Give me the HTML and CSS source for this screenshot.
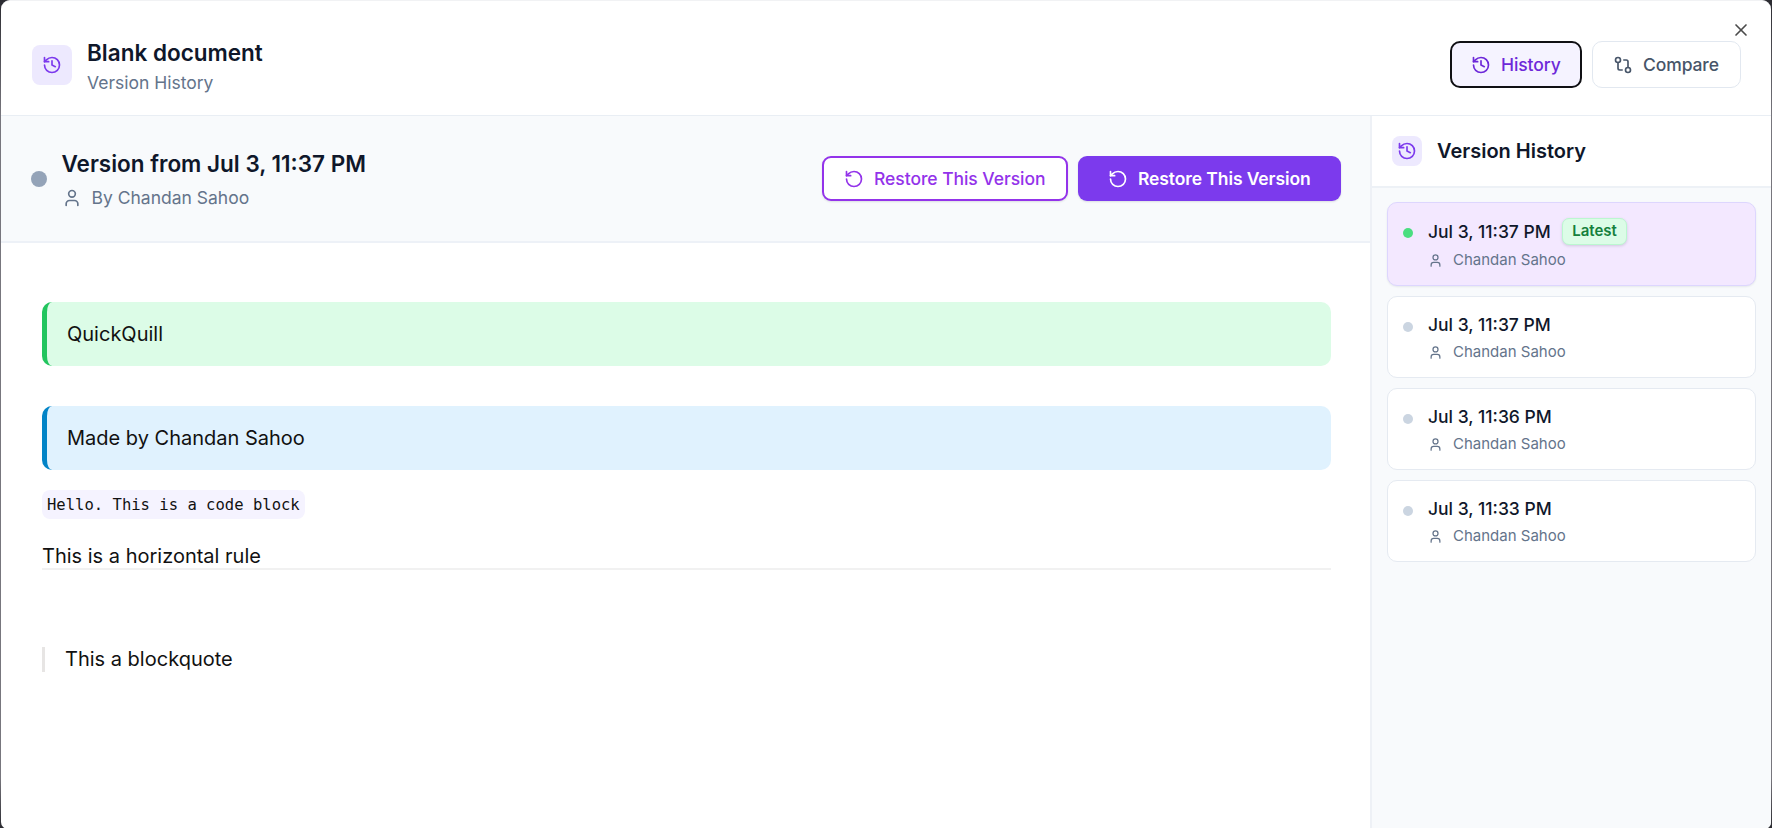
FILE: index.html
```html
<!DOCTYPE html>
<html lang="en">
<head>
<meta charset="utf-8">
<title>Version History</title>
<link rel="stylesheet" href="styles.css">
</head>
<body>
<svg class="sprite" aria-hidden="true">
  <symbol id="history" viewBox="0 0 24 24"><path d="M3 12a9 9 0 1 0 9-9 9.75 9.75 0 0 0-6.74 2.74L3 8"/><path d="M3 3v5h5"/><path d="M12 7v5l4 2"/></symbol>
  <symbol id="restore" viewBox="0 0 24 24"><path d="M3 12a9 9 0 1 0 9-9 9.75 9.75 0 0 0-6.74 2.74L3 8"/><path d="M3 3v5h5"/></symbol>
  <symbol id="compare" viewBox="0 0 24 24"><circle cx="18" cy="18" r="3"/><circle cx="6" cy="6" r="3"/><path d="M13 6h3a2 2 0 0 1 2 2v7"/><path d="M11 18H8a2 2 0 0 1-2-2V9"/></symbol>
  <symbol id="user" viewBox="0 0 24 24"><path d="M19 21v-2a4 4 0 0 0-4-4H9a4 4 0 0 0-4 4v2"/><circle cx="12" cy="7" r="4"/></symbol>
  <symbol id="close" viewBox="0 0 24 24"><path d="M18 6 6 18"/><path d="m6 6 12 12"/></symbol>
</svg>
<div class="dialog">
  <header class="header">
    <div class="brand">
      <span class="tile"><svg class="icon"><use href="#history"/></svg></span>
      <div>
        <h1 class="title">Blank document</h1>
        <p class="subtitle">Version History</p>
      </div>
    </div>
    <div class="tabs">
      <button class="tab tab-active"><svg class="icon"><use href="#history"/></svg>History</button>
      <button class="tab"><svg class="icon"><use href="#compare"/></svg>Compare</button>
    </div>
    <button class="close" aria-label="Close"><svg class="icon"><use href="#close"/></svg></button>
  </header>
  <div class="body">
    <main class="main">
      <div class="version-bar">
        <span class="version-dot"></span>
        <div class="version-info">
          <h2 class="version-title">Version from Jul 3, 11:37 PM</h2>
          <p class="version-author"><svg class="icon"><use href="#user"/></svg>By Chandan Sahoo</p>
        </div>
        <div class="actions">
          <button class="btn btn-outline"><svg class="icon"><use href="#restore"/></svg>Restore This Version</button>
          <button class="btn btn-solid"><svg class="icon"><use href="#restore"/></svg>Restore This Version</button>
        </div>
      </div>
      <article class="doc">
        <div class="callout callout-green">QuickQuill</div>
        <div class="callout callout-blue">Made by Chandan Sahoo</div>
        <code class="code">Hello. This is a code block</code>
        <p class="text">This is a horizontal rule</p>
        <hr class="rule">
        <blockquote class="quote">This a blockquote</blockquote>
      </article>
    </main>
    <aside class="side">
      <div class="side-head">
        <span class="tile tile-small"><svg class="icon"><use href="#history"/></svg></span>
        <h2 class="side-title">Version History</h2>
      </div>
      <div class="list">
        <div class="card card-active">
          <span class="dot"></span>
          <div><div class="date">Jul 3, 11:37 PM<span class="badge">Latest</span></div><p class="author"><svg class="icon"><use href="#user"/></svg>Chandan Sahoo</p></div>
        </div>
        <div class="card">
          <span class="dot"></span>
          <div><div class="date">Jul 3, 11:37 PM</div><p class="author"><svg class="icon"><use href="#user"/></svg>Chandan Sahoo</p></div>
        </div>
        <div class="card">
          <span class="dot"></span>
          <div><div class="date">Jul 3, 11:36 PM</div><p class="author"><svg class="icon"><use href="#user"/></svg>Chandan Sahoo</p></div>
        </div>
        <div class="card">
          <span class="dot"></span>
          <div><div class="date">Jul 3, 11:33 PM</div><p class="author"><svg class="icon"><use href="#user"/></svg>Chandan Sahoo</p></div>
        </div>
      </div>
    </aside>
  </div>
</div>
</body>
</html>
```

FILE: styles.css
```css
* { box-sizing: border-box; }
html, body { height: 100%; }
body {
  margin: 0;
  overflow: hidden;
  background: linear-gradient(#2b2b31, #77767d 14%, #77767d 94%, #2b2b31);
  font-family: Inter, sans-serif;
  color: #0f172a;
}
h1, h2, p, blockquote { margin: 0; }
button { font-family: inherit; background: none; border: 0; margin: 0; white-space: nowrap; }
.sprite { position: absolute; width: 0; height: 0; }
.icon {
  width: 20px;
  height: 20px;
  flex: none;
  fill: none;
  stroke: currentColor;
  stroke-width: 2;
  stroke-linecap: round;
  stroke-linejoin: round;
}

.dialog {
  display: flex;
  flex-direction: column;
  height: 829px;
  margin: 0 1px;
  border-radius: 9px 9px 7px 7px;
  border-top: 1px solid #f1f2f4;
  background: #fff;
  overflow: hidden;
}
.header {
  position: relative;
  flex: none;
  display: flex;
  align-items: center;
  justify-content: space-between;
  height: 115px;
  padding: 14px 30px 0 31px;
  border-bottom: 1px solid #e9eef4;
}
.brand { display: flex; align-items: center; gap: 15px; }
.brand > div { padding-top: 3px; }
.tile {
  display: flex;
  align-items: center;
  justify-content: center;
  width: 40px;
  height: 40px;
  border-radius: 8px;
  background: #ede9fe;
  color: #7c3aed;
}
.title { font-size: 22.5px; line-height: 28px; font-weight: 600; }
.subtitle { margin-top: 3px; font-size: 17.5px; line-height: 25px; color: #64748b; }
.tabs { display: flex; gap: 10px; margin-top: -1px; }
.tab {
  display: flex;
  align-items: center;
  gap: 10px;
  width: 149px;
  height: 47px;
  padding: 0 0 0 20px;
  border: 1px solid #e2e8f0;
  border-radius: 10px;
  font-size: 17.5px;
  font-weight: 500;
  letter-spacing: -.1px;
  color: #475569;
}
.tab-active { width: 132px; border: 2px solid #101014; background: #f5f3ff; color: #6d28d9; padding: 0 0 0 19px; }
.close {
  position: absolute;
  top: 19px;
  right: 20px;
  padding: 0;
  width: 20px;
  height: 20px;
  color: #4b4b4b;
}

.body { flex: 1; display: flex; min-height: 0; }
.main { flex: 1; display: flex; flex-direction: column; min-width: 0; }
.version-bar {
  flex: none;
  display: flex;
  align-items: center;
  height: 127px;
  padding: 0 29px 0 30px;
  border-bottom: 2px solid #edf1f7;
  background: #f8fafc;
}
.version-dot { width: 16px; height: 16px; border-radius: 50%; background: #94a3b8; }
.version-info { flex: 1; margin-left: 14.5px; padding-top: 1px; }
.version-title { font-size: 22.5px; line-height: 32px; font-weight: 600; }
.version-author {
  display: flex;
  align-items: center;
  gap: 10px;
  margin-top: 5px;
  font-size: 17.5px;
  line-height: 25px;
  color: #64748b;
}
.actions { display: flex; gap: 10px; }
.btn {
  display: flex;
  align-items: center;
  gap: 10px;
  height: 45px;
  border-radius: 9px;
  font-size: 17.5px;
  letter-spacing: -.05px;
  box-shadow: 0 1px 2px rgba(15, 23, 42, .12);
}
.btn-outline { width: 246px; padding: 0 0 0 20px; border: 2px solid #9333ea; background: #fff; color: #9333ea; font-weight: 500; }
.btn-solid { width: 263px; padding: 0 0 0 30px; background: #7c3aed; color: #fff; font-weight: 600; letter-spacing: -.1px; }

.doc { padding: 59px 39px 0 41px; font-size: 20px; color: #111; }
.callout {
  display: flex;
  align-items: center;
  height: 64px;
  margin-bottom: 40px;
  padding-left: 20px;
  border-left: 5px solid;
  border-radius: 10px;
  color: #111;
}
.callout-green { border-left-color: #22c55e; background: #dcfce7; }
.callout-blue { margin-bottom: 20px; border-left-color: #0284c7; background: #e0f2fe; }
.code {
  display: block;
  width: 263px;
  height: 29px;
  padding-left: 5px;
  border-radius: 8px;
  background: #f5f3ff;
  font-family: "DejaVu Sans Mono", monospace;
  font-size: 15.55px;
  line-height: 31px;
  white-space: nowrap;
}
.text { margin-top: 25px; line-height: 24px; }
.rule { height: 2px; margin: 0; border: 0; background: #f1f1f1; }
.quote { margin-top: 77px; padding-left: 20px; border-left: 3px solid #e7e5e4; line-height: 25px; }

.side {
  flex: none;
  display: flex;
  flex-direction: column;
  width: 401px;
  border-left: 2px solid #eef1f6;
  background: #f8fafc;
}
.side-head {
  display: flex;
  align-items: center;
  gap: 15px;
  height: 72px;
  padding-left: 20px;
  border-bottom: 2px solid #edf1f6;
  background: #fff;
}
.tile-small { width: 30px; height: 30px; }
.side-title { font-size: 20px; line-height: 28px; font-weight: 600; }
.list { display: flex; flex-direction: column; gap: 10px; padding: 14px 15px; }
.card {
  display: flex;
  gap: 15px;
  height: 82px;
  padding: 14px 15px;
  border: 1px solid #e5eaf1;
  border-radius: 10px;
  background: #fff;
}
.card-active { height: 84px; border-color: #ddd6fe; background: #f3e8ff; box-shadow: 0 1px 2px rgba(15, 23, 42, .08); }
.dot { flex: none; width: 10px; height: 10px; margin-top: 11px; border-radius: 50%; background: #cbd5e1; }
.card-active .dot { background: #4ade80; }
.date { display: flex; align-items: center; gap: 11px; height: 26px; font-size: 17.5px; font-weight: 500; }
.card-active .date { height: 28px; }
.badge {
  height: 27px;
  margin-top: 1px;
  padding: 0 9.5px;
  border: 1px solid #bbf7d0;
  border-radius: 7px;
  background: #dcfce7;
  color: #15803d;
  font-size: 15px;
  line-height: 24px;
  font-weight: 600;
  box-shadow: 0 1px 3px rgba(15, 23, 42, .15);
}
.author { display: flex; align-items: center; gap: 10px; margin-top: 5px; font-size: 15px; line-height: 20px; color: #64748b; }
.author .icon { width: 15px; height: 15px; }
```
